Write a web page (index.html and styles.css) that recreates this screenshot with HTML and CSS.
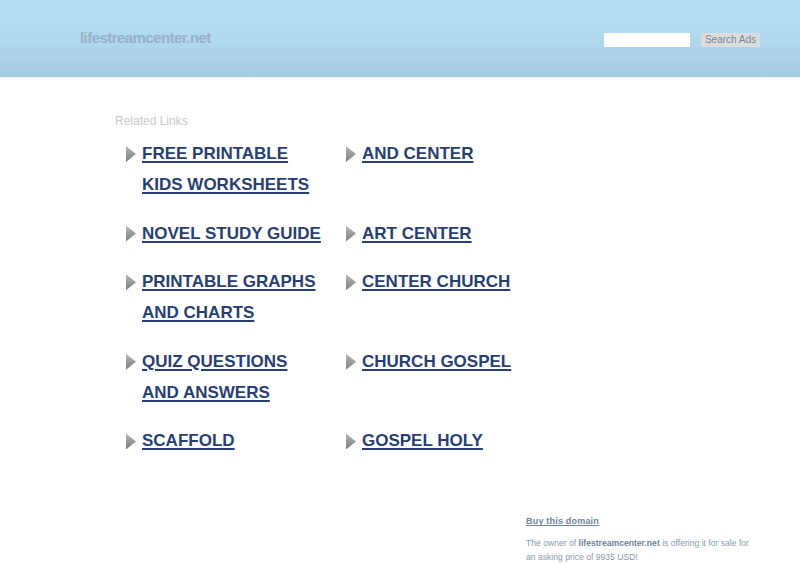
FILE: index.html
```html
<!DOCTYPE html>
<html>
<head>
<meta charset="utf-8">
<link rel="stylesheet" href="styles.css">
</head>
<body>
<header class="top">
  <div class="logo">lifestreamcenter.net</div>
  <form class="search">
    <input class="search-input" type="text">
    <button class="search-btn" type="button">Search Ads</button>
  </form>
</header>
<main class="content">
  <div class="related">Related Links</div>
  <div class="links">
    <div class="item"><span class="arrow"></span><a href="#">FREE PRINTABLE KIDS WORKSHEETS</a></div>
    <div class="item"><span class="arrow"></span><a href="#">AND CENTER</a></div>
    <div class="item"><span class="arrow"></span><a href="#">NOVEL STUDY GUIDE</a></div>
    <div class="item"><span class="arrow"></span><a href="#">ART CENTER</a></div>
    <div class="item"><span class="arrow"></span><a href="#">PRINTABLE GRAPHS AND CHARTS</a></div>
    <div class="item"><span class="arrow"></span><a href="#">CENTER CHURCH</a></div>
    <div class="item"><span class="arrow"></span><a href="#">QUIZ QUESTIONS AND ANSWERS</a></div>
    <div class="item"><span class="arrow"></span><a href="#">CHURCH GOSPEL</a></div>
    <div class="item"><span class="arrow"></span><a href="#">SCAFFOLD</a></div>
    <div class="item"><span class="arrow"></span><a href="#">GOSPEL HOLY</a></div>
  </div>
  <div class="sale">
    <a class="buy" href="#">Buy this domain</a>
    <p class="sale-text">The owner of <b>lifestreamcenter.net</b> is offering it for sale for an asking price of 9935 USD!</p>
  </div>
</main>
</body>
</html>
```

FILE: styles.css
```css
html, body {
  margin: 0;
  padding: 0;
  background: #ffffff;
  font-family: "Liberation Sans", Arial, sans-serif;
}
.top {
  height: 77px;
  border-bottom: 1px solid #eef6fb;
  background: linear-gradient(to bottom, #b5def3 0%, #b2dbf1 40%, #a6cbe4 100%);
  display: flex;
  align-items: center;
  justify-content: space-between;
  padding: 0 40px 0 80px;
}
.logo {
  font-weight: bold;
  font-size: 15px;
  letter-spacing: -0.55px;
  color: #98b1c8;
  margin-top: -3px;
}
.search {
  display: flex;
  align-items: center;
  gap: 11px;
  margin: 2px 0 0 0;
}
.search-input {
  width: 86px;
  height: 14px;
  border: none;
  padding: 0;
  margin: 0;
  background: #ffffff;
  box-sizing: border-box;
}
.search-btn {
  width: 59px;
  height: 14px;
  border: none;
  padding: 0;
  margin: 0;
  background: #dcdcdc;
  color: #75889a;
  font-family: "Liberation Sans", Arial, sans-serif;
  font-size: 10px;
  line-height: 14px;
}
.content {
  padding: 36px 40px 0 115px;
  display: flex;
  flex-direction: column;
}
.related {
  font-size: 12px;
  color: #c9c9c9;
  line-height: 14px;
}
.links {
  display: grid;
  grid-template-columns: 220px 220px;
  row-gap: 17.6px;
  margin: 10px 0 0 11px;
}
.item {
  display: flex;
  align-items: flex-start;
  gap: 6px;
  width: 202px;
}
.arrow {
  flex: none;
  width: 10px;
  height: 16px;
  margin-top: 8px;
  background: linear-gradient(to bottom, #b9b9b9, #7d7d7d);
  clip-path: polygon(0 0, 100% 50%, 0 100%);
}
.item a {
  font-size: 17px;
  font-weight: bold;
  line-height: 31px;
  color: #283f6f;
  text-decoration: underline;
  text-decoration-thickness: 2px;
  text-underline-offset: 2px;
}
.sale {
  align-self: flex-end;
  width: 234px;
  margin-top: 54px;
}
.buy {
  font-size: 9px;
  font-weight: bold;
  color: #6d849b;
  line-height: 14px;
  letter-spacing: 0.2px;
}
.sale-text {
  margin: 8px 0 0 0;
  font-size: 8.6px;
  line-height: 14px;
  color: #8a9aaa;
}
.sale-text b {
  color: #6f8397;
}
```
